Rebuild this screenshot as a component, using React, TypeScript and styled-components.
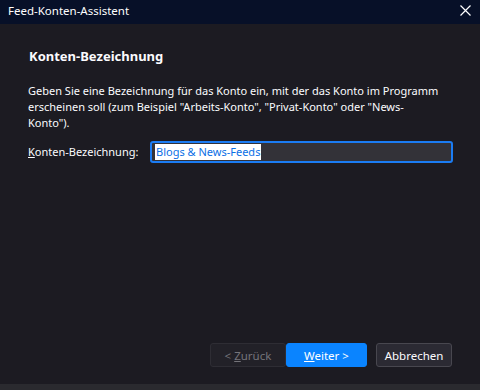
import styled, { createGlobalStyle } from 'styled-components';

const GlobalStyle = createGlobalStyle`
  html, body {
    margin: 0;
    padding: 0;
    background: #1c1b22;
  }
  body {
    font-family: "Noto Sans", "Open Sans", sans-serif;
    font-size: 11px;
    color: #fbfbfe;
  }
`;

function App() {
  return (
    <Window>
      <GlobalStyle />
      <TitleBar>
        <Title>Feed-Konten-Assistent</Title>
        <CloseBtn aria-label="Schließen">
          <svg width="11" height="11" viewBox="0 0 11 11">
            <path d="M0.5 0.5 L10.5 10.5 M10.5 0.5 L0.5 10.5" stroke="#ffffff" strokeWidth="1.2" />
          </svg>
        </CloseBtn>
      </TitleBar>
      <Content>
        <Heading>Konten-Bezeichnung</Heading>
        <Description>
          Geben Sie eine Bezeichnung für das Konto ein, mit der das Konto im Programm
          <br />
          erscheinen soll (zum Beispiel "Arbeits-Konto", "Privat-Konto" oder "News-
          <br />
          Konto").
        </Description>
        <FieldRow>
          <Label>
            <u>K</u>onten-Bezeichnung:
          </Label>
          <TextBox>
            <Selected>Blogs &amp; News-Feeds</Selected>
          </TextBox>
        </FieldRow>
      </Content>
      <ButtonBar>
        <Pair>
          <WizardBtn $variant="disabled">
            <span>
              &lt; <u>Z</u>urück
            </span>
          </WizardBtn>
          <WizardBtn $variant="primary">
            <span>
              <u>W</u>eiter &gt;
            </span>
          </WizardBtn>
        </Pair>
        <WizardBtn $variant="default">Abbrechen</WizardBtn>
      </ButtonBar>
      <BottomStrip />
    </Window>
  );
}

const Window = styled.div`
  display: flex;
  flex-direction: column;
  width: 480px;
  height: 390px;
  background: #1c1b22;
`;

const TitleBar = styled.div`
  display: flex;
  justify-content: space-between;
  align-items: center;
  height: 24px;
  padding: 0 9px 0 8px;
  background: #071028;
`;

const Title = styled.div`
  font-size: 11.5px;
  color: #ffffff;
  line-height: 24px;
  margin-top: -2px;
`;

const CloseBtn = styled.div`
  display: flex;
  align-items: center;
  margin-top: -4px;
`;

const Content = styled.div`
  flex: 1;
  display: flex;
  flex-direction: column;
  padding: 22px 27px 0 28px;
`;

const Heading = styled.div`
  font-size: 13px;
  font-weight: 700;
  margin-left: 1px;
  line-height: 20px;
`;

const Description = styled.div`
  margin-top: 17px;
  line-height: 16px;
  white-space: nowrap;
`;

const FieldRow = styled.div`
  display: flex;
  align-items: center;
  margin-top: 10px;
`;

const Label = styled.div`
  width: 122px;
  line-height: 22px;
`;

const TextBox = styled.div`
  display: flex;
  align-items: center;
  box-sizing: border-box;
  width: 303px;
  height: 22px;
  padding: 0 3px;
  border: 2px solid #1b7cf3;
  border-radius: 3px;
  background: #333238;
`;

const Selected = styled.span`
  background: #ffffff;
  color: #0a6fe6;
  line-height: 16px;
  padding: 0 1px;
`;

const ButtonBar = styled.div`
  display: flex;
  justify-content: flex-end;
  gap: 9px;
  padding: 0 28px 17px 0;
`;

const Pair = styled.div`
  display: flex;
`;

const variants = {
  disabled: 'background: #222128; border-color: #2e2d34; color: #75747a;',
  primary: 'background: #0a84ff; border-color: #0a84ff; color: #ffffff;',
  default: 'background: #2b2a33; border-color: #48474f; color: #fbfbfe;',
};

const WizardBtn = styled.div<{ $variant: keyof typeof variants }>`
  display: flex;
  align-items: center;
  justify-content: center;
  box-sizing: border-box;
  width: ${(p) => (p.$variant === 'primary' ? '81px' : '76px')};
  height: 24px;
  border: 1px solid;
  border-radius: 3px;
  font-size: 11.5px;
  ${(p) => variants[p.$variant]}
`;

const BottomStrip = styled.div`
  height: 6px;
  background: #2a2a2f;
`;

export default App;
